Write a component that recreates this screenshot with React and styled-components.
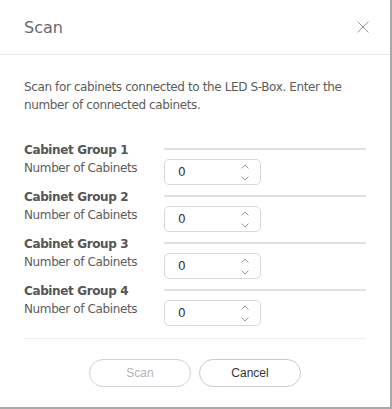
import React from 'react'
import styled, { createGlobalStyle } from 'styled-components'

const GlobalStyle = createGlobalStyle`
    html, body {
        margin: 0;
        padding: 0;
        background: #ffffff;
    }
`

const Frame = styled.div`
    width: 392px;
    height: 409px;
    background: #a9a9a9;
    font-family: "DejaVu Sans", Verdana, sans-serif;
`

const Dialog = styled.div`
    width: 390px;
    height: 407px;
    background: #ffffff;
    display: flex;
    flex-direction: column;
`

const Header = styled.div`
    height: 54px;
    border-bottom: 1px solid #e6e6e6;
    display: flex;
    align-items: center;
    justify-content: space-between;
    padding: 0 20px 0 24px;
`

const Title = styled.h2`
    margin: 0;
    font-size: 16px;
    font-weight: normal;
    color: #666a70;
`

const CloseButton = styled.button`
    border: 0;
    background: none;
    padding: 0;
    width: 14px;
    height: 14px;
    display: flex;
    align-items: center;
    justify-content: center;
    cursor: pointer;
`

const Body = styled.div`
    padding: 23px 24px 0;
    letter-spacing: -0.38px;
`

const Description = styled.p`
    margin: 0 0 27px;
    font-size: 12px;
    line-height: 18px;
    color: #5c5c5c;
`

const Group = styled.div`
    display: grid;
    grid-template-columns: 140px 1fr;
    margin-bottom: 3px;
`

const GroupTitle = styled.div`
    font-size: 12px;
    font-weight: bold;
    line-height: 18px;
    color: #555555;
`

const Rule = styled.div`
    align-self: center;
    height: 2px;
    margin-bottom: 2px;
    background: #dde1e8;
`

const FieldLabel = styled.div`
    font-size: 12px;
    line-height: 18px;
    color: #5c5c5c;
`

const Spinner = styled.div`
    box-sizing: border-box;
    width: 97px;
    height: 26px;
    border: 1px solid #d9d9d9;
    border-radius: 5px;
    display: flex;
    align-items: center;
    justify-content: space-between;
    padding: 0 11px 0 13px;
    font-size: 12px;
    color: #333333;
`

const Steps = styled.div`
    display: flex;
    flex-direction: column;
    gap: 7px;
`

const Footer = styled.div`
    margin: 9px 24px 0;
    border-top: 1px solid #efefef;
    padding-top: 20px;
    display: flex;
    justify-content: center;
    gap: 8px;
`

const Button = styled.button`
    width: 102px;
    height: 28px;
    border-radius: 14px;
    border: 1px solid ${props => props.disabled ? '#d2d2d2' : '#cccccc'};
    background: #ffffff;
    font-family: "Liberation Sans", Arial, sans-serif;
    font-size: 12px;
    color: ${props => props.disabled ? '#b5b5b5' : '#333333'};
    padding: 0;
`

function Chevron({ down }) {
    return (
        <svg width="8" height="5" viewBox="0 0 8 5">
            <path
                d={down ? "M0.5 0.5 L4 4 L7.5 0.5" : "M0.5 4.5 L4 1 L7.5 4.5"}
                fill="none"
                stroke="#9a9a9a"
                strokeWidth="1"
            />
        </svg>
    )
}

const groups = [1, 2, 3, 4]

function App() {
    return (
        <Frame>
            <GlobalStyle />
            <Dialog>
                <Header>
                    <Title>Scan</Title>
                    <CloseButton aria-label="Close">
                        <svg width="12" height="12" viewBox="0 0 12 12">
                            <path d="M0.5 0.5 L11.5 11.5 M11.5 0.5 L0.5 11.5" stroke="#9a9a9a" strokeWidth="1" />
                        </svg>
                    </CloseButton>
                </Header>
                <Body>
                    <Description>
                        Scan for cabinets connected to the LED S-Box. Enter the number of connected cabinets.
                    </Description>
                    {groups.map(n => (
                        <Group key={n}>
                            <GroupTitle>Cabinet Group {n}</GroupTitle>
                            <Rule />
                            <FieldLabel>Number of Cabinets</FieldLabel>
                            <Spinner>
                                <span>0</span>
                                <Steps>
                                    <Chevron />
                                    <Chevron down />
                                </Steps>
                            </Spinner>
                        </Group>
                    ))}
                </Body>
                <Footer>
                    <Button disabled>Scan</Button>
                    <Button>Cancel</Button>
                </Footer>
            </Dialog>
        </Frame>
    )
}

export default App
